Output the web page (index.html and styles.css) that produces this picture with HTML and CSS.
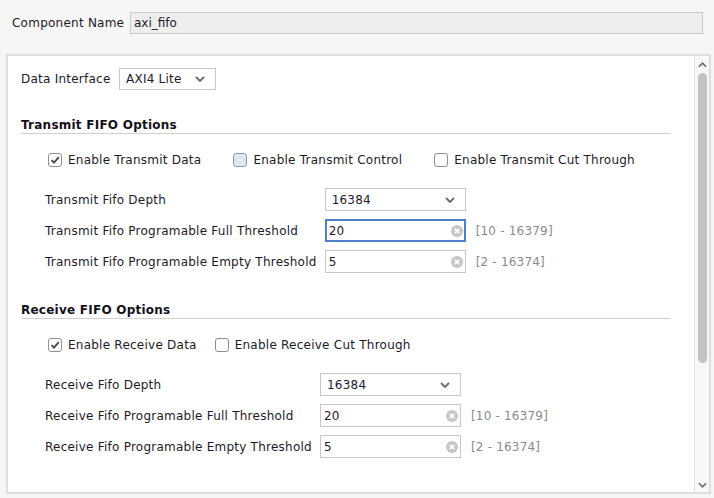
FILE: index.html
```html
<!DOCTYPE html>
<html>
<head>
<meta charset="utf-8">
<link rel="stylesheet" href="styles.css">
</head>
<body>
<div class="header">
  <span class="hlabel">Component Name</span>
  <div class="name-input">axi_fifo</div>
</div>
<div class="panel">
  <div class="content">
    <div class="di-row">
      <span class="di-label">Data Interface</span>
      <div class="select di-select"><span>AXI4 Lite</span><svg class="chev" viewBox="0 0 10 6"><path d="M1 1 L5 5 L9 1" /></svg></div>
    </div>

    <div class="section-title">Transmit FIFO Options</div>
    <div class="checks">
      <label class="check"><span class="box checked"><svg viewBox="0 0 12 12"><path d="M2.5 6.2 L5 8.7 L9.8 3.2" /></svg></span>Enable Transmit Data</label>
      <label class="check"><span class="box hover"></span>Enable Transmit Control</label>
      <label class="check"><span class="box"></span>Enable Transmit Cut Through</label>
    </div>
    <div class="fields">
      <span class="flabel">Transmit Fifo Depth</span>
      <div class="select"><span>16384</span><svg class="chev" viewBox="0 0 10 6"><path d="M1 1 L5 5 L9 1" /></svg></div>
      <span></span>
      <span class="flabel">Transmit Fifo Programable Full Threshold</span>
      <div class="input focus"><span>20</span><span class="clear"><svg viewBox="0 0 12 12"><circle cx="6" cy="6" r="6"/><path d="M3.8 3.8 L8.2 8.2 M8.2 3.8 L3.8 8.2"/></svg></span></div>
      <span class="range">[10 - 16379]</span>
      <span class="flabel">Transmit Fifo Programable Empty Threshold</span>
      <div class="input"><span>5</span><span class="clear"><svg viewBox="0 0 12 12"><circle cx="6" cy="6" r="6"/><path d="M3.8 3.8 L8.2 8.2 M8.2 3.8 L3.8 8.2"/></svg></span></div>
      <span class="range">[2 - 16374]</span>
    </div>

    <div class="section-title">Receive FIFO Options</div>
    <div class="checks tight">
      <label class="check"><span class="box checked"><svg viewBox="0 0 12 12"><path d="M2.5 6.2 L5 8.7 L9.8 3.2" /></svg></span>Enable Receive Data</label>
      <label class="check"><span class="box"></span>Enable Receive Cut Through</label>
    </div>
    <div class="fields">
      <span class="flabel">Receive Fifo Depth</span>
      <div class="select"><span>16384</span><svg class="chev" viewBox="0 0 10 6"><path d="M1 1 L5 5 L9 1" /></svg></div>
      <span></span>
      <span class="flabel">Receive Fifo Programable Full Threshold</span>
      <div class="input"><span>20</span><span class="clear"><svg viewBox="0 0 12 12"><circle cx="6" cy="6" r="6"/><path d="M3.8 3.8 L8.2 8.2 M8.2 3.8 L3.8 8.2"/></svg></span></div>
      <span class="range">[10 - 16379]</span>
      <span class="flabel">Receive Fifo Programable Empty Threshold</span>
      <div class="input"><span>5</span><span class="clear"><svg viewBox="0 0 12 12"><circle cx="6" cy="6" r="6"/><path d="M3.8 3.8 L8.2 8.2 M8.2 3.8 L3.8 8.2"/></svg></span></div>
      <span class="range">[2 - 16374]</span>
    </div>
  </div>
  <div class="scrollbar">
    <svg class="sarrow" viewBox="0 0 10 6"><path d="M1 5 L5 1 L9 5" /></svg>
    <div class="thumb"></div>
    <div class="spacer"></div>
    <svg class="sarrow" viewBox="0 0 10 6"><path d="M1 1 L5 5 L9 1" /></svg>
  </div>
</div>
</body>
</html>
```
FILE: styles.css
```css
* { box-sizing: border-box; }
html, body { margin: 0; padding: 0; }
body {
  background: #f6f6f6;
  font-family: "DejaVu Sans", Verdana, sans-serif;
  font-size: 12px;
  letter-spacing: 0.24px;
  color: #1e1a28;
  width: 714px;
  height: 498px;
  overflow: hidden;
}
.header {
  display: flex;
  align-items: center;
  padding: 12px 0 0 12px;
  height: 34px;
}
.hlabel { width: 118px; }
.name-input {
  width: 573px;
  height: 22px;
  background: #eeeeee;
  border: 1px solid #c9c9c9;
  padding: 0 0 0 3px;
  line-height: 20px;
  letter-spacing: 0;
}
.panel {
  margin: 20px 0 0 6px;
  width: 705px;
  height: 440px;
  border: 2px solid #dedede;
  background: #ffffff;
  display: flex;
}
.content {
  flex: 1;
  padding: 12px 23px 0 13px;
}
.di-row {
  display: flex;
  align-items: center;
  height: 22px;
}
.di-label { width: 98px; }
.select {
  display: flex;
  align-items: center;
  justify-content: space-between;
  height: 23px;
  border: 1px solid #c8c8c8;
  background: #fff;
  padding: 0 10px 0 6px;
  width: 141px;
}
.di-select { width: 97px; height: 22px; padding-left: 6px; }
.chev { width: 10px; height: 6px; }
.chev path, .sarrow path {
  fill: none;
  stroke: #6a6a6a;
  stroke-width: 1.8;
}
.section-title {
  margin-top: 27px;
  font-weight: bold;
  line-height: 16px;
  border-bottom: 1px solid #d0d0d0;
  color: #141018;
}
.checks {
  display: flex;
  align-items: center;
  gap: 32px;
  margin: 17px 0 0 27px;
  height: 18px;
}
.checks.tight { gap: 18px; }
.check {
  display: flex;
  align-items: center;
  gap: 6px;
}
.box {
  width: 14px;
  height: 14px;
  border: 1px solid #8e8e8e;
  border-radius: 3px;
  background: #fff;
  display: flex;
  align-items: center;
  justify-content: center;
}
.box.hover { background: #dde6f3; border-color: #8d96a3; }
.box svg { width: 12px; height: 12px; }
.box path { fill: none; stroke: #4a4a4a; stroke-width: 1.9; }
.fields {
  display: grid;
  grid-template-columns: max-content 141px max-content;
  column-gap: 8px;
  row-gap: 8px;
  grid-auto-rows: 23px;
  align-items: center;
  margin: 19px 0 0 24px;
}
.fields .range { margin-left: 2px; color: #8a8a8e; letter-spacing: 0.2px; }
.input {
  display: flex;
  align-items: center;
  justify-content: space-between;
  height: 23px;
  border: 1px solid #c8c8c8;
  padding: 0 2px 0 3px;
}
.input.focus { border: 2px solid #4f7fca; padding-left: 2px; padding-right: 1px; }
.clear { width: 12px; height: 12px; display: flex; }
.clear svg { width: 12px; height: 12px; }
.clear circle { fill: #c6c6c6; }
.clear path { stroke: #ffffff; stroke-width: 1.8; }
.fields + .section-title { margin-top: 29px; }
.scrollbar {
  width: 15px;
  background: #f7f7f7;
  border-left: 1px solid #e4e4e4;
  display: flex;
  flex-direction: column;
  align-items: center;
  padding: 6px 0 4px 0;
}
.sarrow { width: 9px; height: 6px; flex: none; }
.thumb {
  margin-top: 5px;
  width: 9px;
  height: 290px;
  background: #c3c3c3;
  border-radius: 5px;
}
.spacer { flex: 1; }
```
